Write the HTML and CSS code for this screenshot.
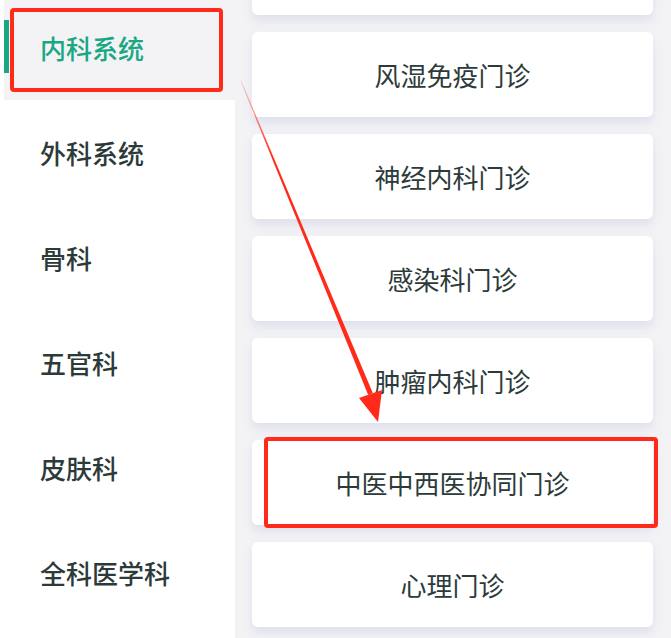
FILE: index.html
```html
<!DOCTYPE html>
<html lang="zh-CN">
<head>
  <meta charset="UTF-8">
  <meta name="viewport" content="width=device-width, initial-scale=1.0">
  <title>科室选择</title>
  <link rel="stylesheet" href="styles.css">
</head>
<body>
  <div class="page">
    <div class="side">
      <div class="side_list">
        <div class="side_item active">内科系统</div>
        <div class="side_item">外科系统</div>
        <div class="side_item">骨科</div>
        <div class="side_item">五官科</div>
        <div class="side_item">皮肤科</div>
        <div class="side_item">全科医学科</div>
      </div>
    </div>
    <div class="main">
      <div class="card_list">
        <!-- scrolled past the top, label not visible -->
        <div class="card"></div>
        <div class="card">风湿免疫门诊</div>
        <div class="card">神经内科门诊</div>
        <div class="card">感染科门诊</div>
        <div class="card">肿瘤内科门诊</div>
        <div class="card">中医中西医协同门诊</div>
        <div class="card">心理门诊</div>
      </div>
    </div>

    <!-- annotation layer -->
    <div class="mark mark_side"></div>
    <div class="mark mark_card"></div>
    <svg class="arrow" width="671" height="638" viewBox="0 0 671 638">
      <defs>
        <linearGradient id="fade" x1="241" y1="81" x2="370" y2="394" gradientUnits="userSpaceOnUse">
          <stop offset="0" stop-color="#ff2a1a" stop-opacity="0.2"/>
          <stop offset="0.25" stop-color="#ff2a1a"/>
          <stop offset="1" stop-color="#ff2a1a"/>
        </linearGradient>
      </defs>
      <polygon points="240.6,81.2 241.4,80.8 372.8,393.1 368.2,394.9" fill="url(#fade)"/>
      <polygon points="359,398 382,390 378,422" fill="#ff2a1a"/>
    </svg>
  </div>
</body>
</html>
```

FILE: styles.css
```css
body {
  margin: 0;
  font-family: "Noto Sans CJK SC", "Noto Sans", sans-serif;
  color: #2d3a3a;
}
.page {
  position: relative;
  display: flex;
  width: 671px;
  height: 638px;
  overflow: hidden;
  background: #fff;
}
.side {
  width: 235px;
  flex: none;
  background: #fff;
}
.side_list {
  margin-top: -5px;
}
.side_item {
  position: relative;
  height: 105px;
  margin-left: 4px;
  padding-left: 36px;
  display: flex;
  align-items: center;
  font-size: 26px;
  font-weight: 500;
}
.side_item.active {
  background: #f3f3f6;
  color: #19a784;
}
.side_item.active::before {
  content: "";
  position: absolute;
  left: 0;
  top: 25px;
  width: 5px;
  height: 53px;
  background: #19a784;
}
.main {
  flex: 1;
  background: #f3f3f6;
  padding: 0 18px 0 17px;
}
.card_list {
  display: flex;
  flex-direction: column;
  gap: 17px;
  margin-top: -70px;
}
.card {
  height: 85px;
  background: #fff;
  border-radius: 6px;
  box-shadow: 0 6px 10px rgba(205, 210, 228, 0.55);
  display: flex;
  align-items: center;
  justify-content: center;
  font-size: 26px;
}
.mark {
  position: absolute;
  border: 4px solid #ff2a1a;
  border-radius: 4px;
  box-sizing: border-box;
}
.mark_side {
  left: 10px;
  top: 8px;
  width: 213px;
  height: 84px;
}
.mark_card {
  left: 264px;
  top: 437px;
  width: 394px;
  height: 91px;
}
.arrow {
  position: absolute;
  left: 0;
  top: 0;
}
```
